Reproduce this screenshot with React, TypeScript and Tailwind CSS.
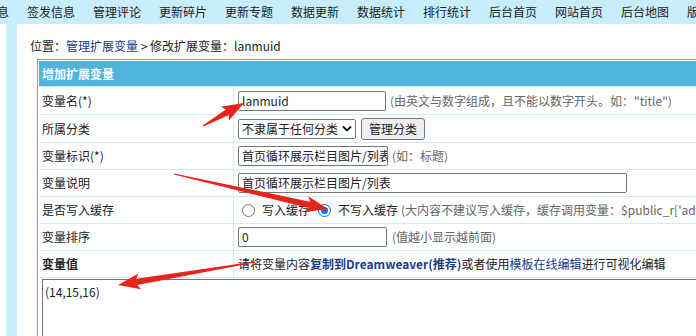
import React from 'react'

const navItems = ['审核信息', '签发信息', '管理评论', '更新碎片', '更新专题', '数据更新', '数据统计', '排行统计', '后台首页', '网站首页', '后台地图', '版本更新']

// red annotation arrows (tail -> tip)
function Arrow({ x1, y1, x2, y2 }: { x1: number; y1: number; x2: number; y2: number }) {
  const dx = x2 - x1
  const dy = y2 - y1
  const len = Math.hypot(dx, dy)
  const ux = dx / len
  const uy = dy / len
  const nx = -uy
  const ny = ux
  const H = 19
  const W = 8
  const N = 3.2
  const T = 0.6
  const bx = x2 - ux * H
  const by = y2 - uy * H
  const pts = [
    [x1 + nx * T, y1 + ny * T],
    [bx + nx * N, by + ny * N],
    [bx + nx * W - ux * 3, by + ny * W - uy * 3],
    [x2, y2],
    [bx - nx * W - ux * 3, by - ny * W - uy * 3],
    [bx - nx * N, by - ny * N],
    [x1 - nx * T, y1 - ny * T],
  ]
  return <polygon points={pts.map((p) => p.join(',')).join(' ')} fill="#e8231b" />
}

function Field({ w, children }: { w: string; children?: React.ReactNode }) {
  return (
    <div className={`${w} h-[20px] shrink-0 border border-[#767676] rounded-[2px] px-[3px] leading-[18px] overflow-hidden whitespace-nowrap bg-white`}>
      {children}
    </div>
  )
}

function Row({ label, bold, h, children }: { label: string; bold?: boolean; h: string; children: React.ReactNode }) {
  return (
    <>
      <div className={`${h} bg-white pl-[3px] flex items-center ${bold ? 'font-bold' : ''}`}>{label}</div>
      <div className={`${h} bg-white pl-[4px] flex items-center whitespace-nowrap overflow-hidden`}>{children}</div>
    </>
  )
}

export default function App() {
  return (
    <div className="relative w-[696px] h-[336px] overflow-hidden bg-white text-[12px] text-[#222] font-['Noto_Sans_CJK_SC',sans-serif]">
      {/* top menu */}
      <nav className="h-[24px] bg-[#c8edfb] flex items-center whitespace-nowrap">
        <div className="flex gap-[18px] ml-[-39px]">
          {navItems.map((t) => (
            <span key={t} className="w-[48px] shrink-0 leading-[24px]">{t}</span>
          ))}
        </div>
      </nav>

      <div className="flex h-[312px]">
        {/* left strip */}
        <div className="w-[17px] shrink-0 flex">
          <div className="w-[6px] bg-white" />
          <div className="flex-1 bg-[#c8edfb]" />
        </div>

        <main className="flex-1 min-w-0 pl-[13px] pt-[14px]">
          <div className="h-[16px] leading-[16px] whitespace-nowrap">
            位置：<a className="text-[#1b3b8e]">管理扩展变量</a> &gt; 修改扩展变量：lanmuid
          </div>

          <div className="mt-[5px] ml-[7px] w-[700px] border border-[#4fb4de] p-px bg-white">
            <div className="grid grid-cols-[194px_1fr] gap-px bg-[#cdedfa]">
              <div className="col-span-2 h-[25px] bg-[#4fb4de] text-white font-bold pl-[3px] flex items-center">增加扩展变量</div>

              <Row label="变量名(*)" h="h-[27px]">
                <Field w="w-[148px]">lanmuid</Field>
                <span className="ml-[4px] text-[#666]">(由英文与数字组成，且不能以数字开头。如："title")</span>
              </Row>

              <Row label="所属分类" h="h-[27px]">
                <div className="w-[118px] h-[20px] border border-[#767676] rounded-[2px] pl-[3px] pr-[3px] flex items-center justify-between">
                  <span>不隶属于任何分类</span>
                  <svg width="10" height="7" viewBox="0 0 10 7">
                    <path d="M1 1.5 L5 5.5 L9 1.5" fill="none" stroke="#111" strokeWidth="1.8" />
                  </svg>
                </div>
                <div className="ml-[5px] w-[64px] h-[22px] bg-[#efefef] border border-[#767676] rounded-[3px] flex items-center justify-center">管理分类</div>
              </Row>

              <Row label="变量标识(*)" h="h-[26px]">
                <Field w="w-[150px]">首页循环展示栏目图片/列表</Field>
                <span className="ml-[4px] text-[#666]">(如：标题)</span>
              </Row>

              <Row label="变量说明" h="h-[26px]">
                <Field w="w-[389px]">首页循环展示栏目图片/列表</Field>
              </Row>

              <Row label="是否写入缓存" h="h-[26px]">
                <span className="ml-[4px] w-[13px] h-[13px] rounded-full border border-[#767676] bg-white shrink-0" />
                <span className="ml-[7px]">写入缓存</span>
                <span className="ml-[8px] w-[13px] h-[13px] rounded-full bg-[#0075ff] shrink-0 flex items-center justify-center">
                  <span className="w-[11px] h-[11px] rounded-full bg-white flex items-center justify-center">
                    <span className="w-[7px] h-[7px] rounded-full bg-[#0075ff]" />
                  </span>
                </span>
                <span className="ml-[7px]">不写入缓存</span>
                <span className="ml-[3px] text-[#666]">(大内容不建议写入缓存，缓存调用变量：$public_r['add_lanmuid'])</span>
              </Row>

              <Row label="变量排序" h="h-[26px]">
                <Field w="w-[149px]">0</Field>
                <span className="ml-[5px] text-[#666]">(值越小显示越前面)</span>
              </Row>

              <Row label="变量值" bold h="h-[26px]">
                <span>请将变量内容</span>
                <a className="text-[#1b3b8e] font-bold">复制到Dreamweaver(推荐)</a>
                <span>或者使用</span>
                <a className="text-[#1b3b8e]">模板在线编辑</a>
                <span>进行可视化编辑</span>
              </Row>

              <div className="col-span-2 h-[70px] bg-white pl-[3px] pt-[1px]">
                <div className="h-full border border-[#767676] px-[2px] pt-[4px] leading-[16px]">(14,15,16)</div>
              </div>
            </div>
          </div>
        </main>
      </div>

      <svg className="absolute inset-0 pointer-events-none" width="696" height="336">
        <Arrow x1={203} y1={126} x2={244} y2={103} />
        <Arrow x1={174} y1={174} x2={328} y2={209} />
        <Arrow x1={255} y1={262} x2={118} y2={285} />
      </svg>
    </div>
  )
}
